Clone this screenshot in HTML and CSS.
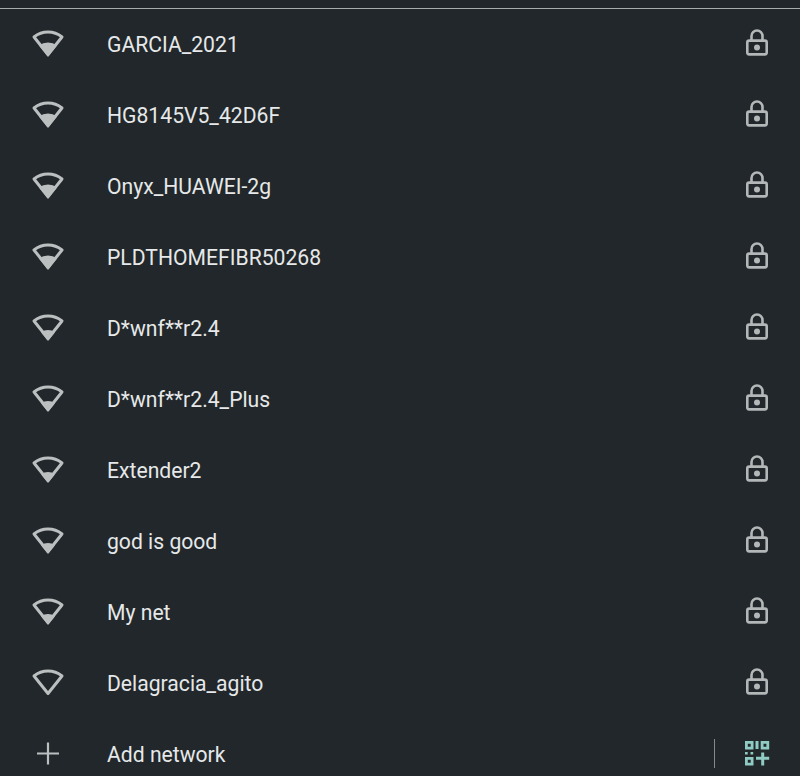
FILE: index.html
```html
<!DOCTYPE html>
<html lang="en">
<head>
    <meta charset="UTF-8">
    <title>Wi-Fi networks</title>
    <link rel="stylesheet" href="styles.css">
</head>
<body>
    <svg class="icon-defs" width="0" height="0" aria-hidden="true">
        <symbol id="wifiFrame" viewBox="0 0 36 32">
            <path d="M18 25.5 L4 8 A22.4 22.4 0 0 1 32 8 Z" fill="none" stroke="currentColor" stroke-width="3" stroke-linejoin="round"/>
        </symbol>
        <symbol id="wifiTwo" viewBox="0 0 36 32">
            <path d="M18 25.5 L4 8 A22.4 22.4 0 0 1 32 8 Z" fill="none" stroke="currentColor" stroke-width="3" stroke-linejoin="round"/>
            <path d="M18 28 L9 16.6 A14.6 14.6 0 0 1 27 16.6 Z" fill="currentColor"/>
        </symbol>
        <symbol id="wifiOne" viewBox="0 0 36 32">
            <path d="M18 25.5 L4 8 A22.4 22.4 0 0 1 32 8 Z" fill="none" stroke="currentColor" stroke-width="3" stroke-linejoin="round"/>
            <path d="M18 28 L11.2 19.4 A11 11 0 0 1 24.8 19.4 Z" fill="currentColor"/>
        </symbol>
        <symbol id="lock" viewBox="0 0 28 32">
            <rect x="4.3" y="11.6" width="19.4" height="13.8" rx="1.8" fill="none" stroke="currentColor" stroke-width="2.6"/>
            <path d="M8.5 12 V7 a5.5 5.5 0 0 1 11 0 V12" fill="none" stroke="currentColor" stroke-width="2.6"/>
            <circle cx="14" cy="18.5" r="3" fill="currentColor"/>
        </symbol>
    </svg>

    <div class="network-list">
        <div class="network-row">
            <svg class="wifi-icon"><use href="#wifiTwo"/></svg>
            <span class="network-name">GARCIA_2021</span>
            <svg class="lock-icon"><use href="#lock"/></svg>
        </div>
        <div class="network-row">
            <svg class="wifi-icon"><use href="#wifiTwo"/></svg>
            <span class="network-name">HG8145V5_42D6F</span>
            <svg class="lock-icon"><use href="#lock"/></svg>
        </div>
        <div class="network-row">
            <svg class="wifi-icon"><use href="#wifiTwo"/></svg>
            <span class="network-name">Onyx_HUAWEI-2g</span>
            <svg class="lock-icon"><use href="#lock"/></svg>
        </div>
        <div class="network-row">
            <svg class="wifi-icon"><use href="#wifiTwo"/></svg>
            <span class="network-name">PLDTHOMEFIBR50268</span>
            <svg class="lock-icon"><use href="#lock"/></svg>
        </div>
        <div class="network-row">
            <svg class="wifi-icon"><use href="#wifiOne"/></svg>
            <span class="network-name">D*wnf**r2.4</span>
            <svg class="lock-icon"><use href="#lock"/></svg>
        </div>
        <div class="network-row">
            <svg class="wifi-icon"><use href="#wifiOne"/></svg>
            <span class="network-name">D*wnf**r2.4_Plus</span>
            <svg class="lock-icon"><use href="#lock"/></svg>
        </div>
        <div class="network-row">
            <svg class="wifi-icon"><use href="#wifiOne"/></svg>
            <span class="network-name">Extender2</span>
            <svg class="lock-icon"><use href="#lock"/></svg>
        </div>
        <div class="network-row">
            <svg class="wifi-icon"><use href="#wifiOne"/></svg>
            <span class="network-name">god is good</span>
            <svg class="lock-icon"><use href="#lock"/></svg>
        </div>
        <div class="network-row">
            <svg class="wifi-icon"><use href="#wifiOne"/></svg>
            <span class="network-name">My net</span>
            <svg class="lock-icon"><use href="#lock"/></svg>
        </div>
        <div class="network-row">
            <svg class="wifi-icon"><use href="#wifiFrame"/></svg>
            <span class="network-name">Delagracia_agito</span>
            <svg class="lock-icon"><use href="#lock"/></svg>
        </div>
        <div class="network-row">
            <svg class="wifi-icon" viewBox="0 0 36 32">
                <path d="M18 3.5 V25.5 M7 14.5 H29" fill="none" stroke="currentColor" stroke-width="2.2"/>
            </svg>
            <span class="network-name">Add network</span>
            <span class="row-divider"></span>
            <svg class="qr-icon" viewBox="0 0 24 24">
                <path fill-rule="evenodd" d="M0 0 H8.5 V8.5 H0 Z M2.8 2.8 V5.7 H5.7 V2.8 Z M15.7 0 H24.2 V8.5 H15.7 Z M18.5 2.8 V5.7 H21.4 V2.8 Z M0 16 H8.5 V24.5 H0 Z M2.8 18.8 V21.7 H5.7 V18.8 Z" fill="currentColor"/>
                <path d="M10.5 0 H13.5 V8 H10.5 Z M0 11 H2.7 V13.4 H0 Z M5.5 11 H8.2 V13.4 H5.5 Z M16.2 11.5 H19.2 V15.8 H24.2 V18.8 H19.2 V24.5 H16.2 V18.8 H11 V15.8 H16.2 Z" fill="currentColor"/>
            </svg>
        </div>
    </div>
</body>
</html>
```

FILE: styles.css
```css
* {
    margin: 0;
    padding: 0;
    box-sizing: border-box;
}

html, body {
    height: 100%;
    width: 100%;
    overflow: hidden;
    background-color: #21272a;
    font-family: Roboto, 'Liberation Sans', sans-serif;
}

.icon-defs {
    display: block;
    height: 0;
}

.network-list {
    margin-top: 8px;
    border-top: 1px solid #a9acad;
}

.network-row {
    display: flex;
    align-items: center;
    height: 71px;
    padding-left: 30px;
    padding-right: 29px;
    color: #bcbfc0;
}

.wifi-icon {
    flex: none;
    width: 36px;
    height: 32px;
    margin-right: 41px;
}

.network-name {
    flex: 1;
    font-size: 21.15px;
    color: #e6e8e9;
}

.lock-icon {
    flex: none;
    width: 28px;
    height: 32px;
    color: #b4b7b8;
}

.row-divider {
    flex: none;
    width: 1px;
    height: 29px;
    margin-right: 30px;
    margin-bottom: 2px;
    background-color: #85898b;
}

.qr-icon {
    flex: none;
    width: 24px;
    height: 24px;
    margin-right: 2px;
    margin-bottom: 3px;
    overflow: visible;
    color: #8fcbc2;
}
```
